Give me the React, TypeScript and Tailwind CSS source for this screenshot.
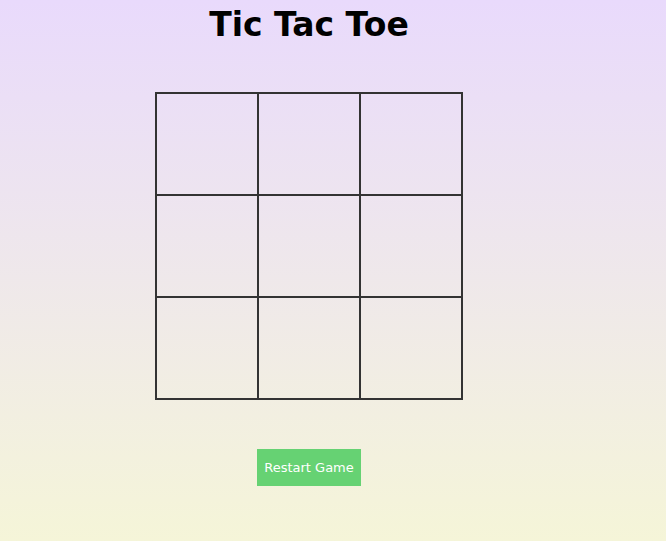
import React from "react";

const cellClasses = [
  "border-r-2 border-b-2",
  "border-r-2 border-b-2",
  "border-b-2",
  "border-r-2 border-b-2",
  "border-r-2 border-b-2",
  "border-b-2",
  "border-r-2",
  "border-r-2",
  "",
];

export default function App() {
  return (
    <div className="min-h-[541px] w-full bg-gradient-to-b from-[#e9dafc] to-[#f5f5d8]">
      <div className="ml-[155px] w-[308px] flex flex-col items-center">
        <h1 className="pt-[5px] text-[33px] leading-[39px] font-bold text-black font-['DejaVu_Sans',sans-serif]">
          Tic Tac Toe
        </h1>
        <div className="mt-[48px] grid grid-cols-[auto_auto_auto] border-2 border-[#333333]">
          {cellClasses.map((c, i) => (
            <div key={i} className={`h-auto w-auto border-[#333333] ${c}`}>
              <div className="h-[100px] w-[100px]" />
            </div>
          ))}
        </div>
        <button className="mt-[49px] h-[37px] w-[104px] bg-[#66d273] text-white text-[13px] font-['Comic_Sans_MS','DejaVu_Sans',sans-serif]">
          Restart Game
        </button>
      </div>
    </div>
  );
}
